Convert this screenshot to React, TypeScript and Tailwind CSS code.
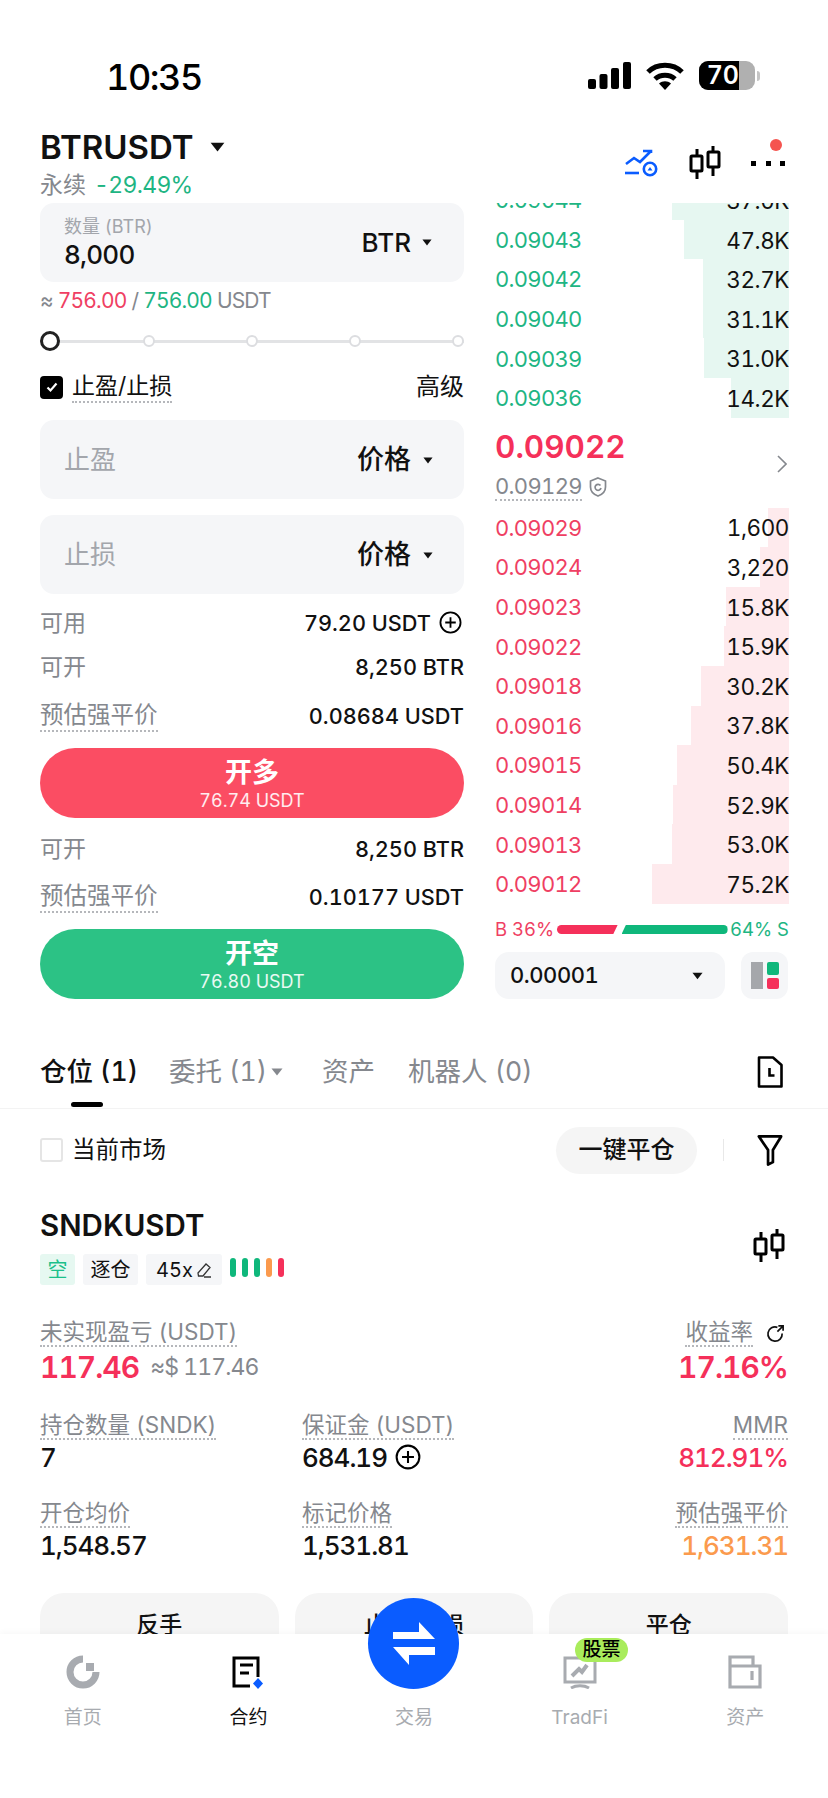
import type { ReactNode } from "react";

const FONT = "font-['Inter','Noto_Sans_CJK_SC',sans-serif]";

const BIDS = [
  { price: "0.09044", size: "37.0K", bar: 117 },
  { price: "0.09043", size: "47.8K", bar: 105 },
  { price: "0.09042", size: "32.7K", bar: 86 },
  { price: "0.09040", size: "31.1K", bar: 86 },
  { price: "0.09039", size: "31.0K", bar: 85 },
  { price: "0.09036", size: "14.2K", bar: 58 },
];

const ASKS = [
  { price: "0.09029", size: "1,600", bar: 21 },
  { price: "0.09024", size: "3,220", bar: 29 },
  { price: "0.09023", size: "15.8K", bar: 63 },
  { price: "0.09022", size: "15.9K", bar: 65 },
  { price: "0.09018", size: "30.2K", bar: 88 },
  { price: "0.09016", size: "37.8K", bar: 98 },
  { price: "0.09015", size: "50.4K", bar: 112 },
  { price: "0.09014", size: "52.9K", bar: 116 },
  { price: "0.09013", size: "53.0K", bar: 117 },
  { price: "0.09012", size: "75.2K", bar: 137 },
];

function Caret({ className = "" }: { className?: string }) {
  return (
    <svg viewBox="0 0 12 8" className={className}>
      <path d="M0.5 0.5h11L6 7.5z" fill="currentColor" />
    </svg>
  );
}

function CandleIcon({ className = "" }: { className?: string }) {
  return (
    <svg viewBox="0 0 32 33" fill="none" stroke="#000" strokeWidth="3" className={className}>
      <path d="M8 3v7M8 25v8M24 0v6M24 21v9" />
      <rect x="2" y="10" width="11" height="15" rx="1" />
      <rect x="19" y="6" width="11" height="15" rx="1" />
    </svg>
  );
}

function PlusCircle({ className = "" }: { className?: string }) {
  return (
    <svg viewBox="0 0 24 24" fill="none" stroke="#000" strokeWidth="1.9" className={className}>
      <circle cx="12" cy="12" r="10.5" />
      <path d="M12 6.5v11M6.5 12h11" />
    </svg>
  );
}

function BookRow({
  price,
  size,
  bar,
  side,
}: {
  price: string;
  size: string;
  bar: number;
  side: "bid" | "ask";
}) {
  const isBid = side === "bid";
  return (
    <div className="relative flex h-[39.6px] items-center justify-between pt-[2px] text-[22px] tracking-[-0.032em]">
      <div
        className={`absolute top-0 right-0 bottom-0 ${isBid ? "bg-[#e6f7f1]" : "bg-[#feeaed]"}`}
        style={{ width: bar }}
      />
      <span className={`relative ${isBid ? "text-[#1eb583]" : "text-[#ef3f63]"}`}>{price}</span>
      <span className="relative text-[22.5px] tracking-[-0.02em] text-[#111]">{size}</span>
    </div>
  );
}

function InfoRow({
  label,
  value,
  dotted,
  className = "",
}: {
  label: string;
  value: ReactNode;
  dotted?: boolean;
  className?: string;
}) {
  return (
    <div className={`flex h-[40px] items-center justify-between text-[21.7px] ${className}`}>
      <span
        className={
          dotted
            ? "border-b-2 border-dotted border-[#b5b7bb] text-[23.5px] leading-[30px] text-[#85888e]"
            : "text-[23px] text-[#85888e]"
        }
      >
        {label}
      </span>
      <span className="font-medium text-[#111]">{value}</span>
    </div>
  );
}

function InputBox({ placeholder, className = "" }: { placeholder: string; className?: string }) {
  return (
    <div
      className={`flex h-[79px] items-center justify-between rounded-[14px] bg-[#f5f6f8] pr-[31px] pl-[24px] ${className}`}
    >
      <span className="text-[26px] text-[#a3a6ac]">{placeholder}</span>
      <span className="flex items-center gap-[12px] pt-[1px] text-[27px] font-medium text-[#111]">
        价格
        <Caret className="h-[7px] w-[10px] text-[#111]" />
      </span>
    </div>
  );
}

function ActionButton({
  title,
  amount,
  color,
  className = "",
}: {
  title: string;
  amount: string;
  color: string;
  className?: string;
}) {
  return (
    <div
      className={`flex h-[70px] flex-col items-center justify-center rounded-full pt-[3px] text-white ${color} ${className}`}
    >
      <span className="text-[27px] leading-[32px] font-bold">{title}</span>
      <span className="text-[18px] leading-[24px] text-white/90">{amount}</span>
    </div>
  );
}

function StatLabel({ children }: { children: ReactNode }) {
  return (
    <span className="inline-block border-b-2 border-dotted border-[#b5b7bb] text-[22.5px] leading-[26px] text-[#85888e]">
      {children}
    </span>
  );
}

function Stat({
  label,
  value,
  right,
}: {
  label: ReactNode;
  value: ReactNode;
  right?: boolean;
}) {
  return (
    <div className={`flex flex-col ${right ? "items-end" : "items-start"}`}>
      <StatLabel>{label}</StatLabel>
      <div className="flex h-[34px] items-center text-[26px] font-medium tracking-[-0.04em] text-[#111]">{value}</div>
    </div>
  );
}

function NavItem({ label, icon, active }: { label: string; icon?: ReactNode; active?: boolean }) {
  return (
    <div className="flex w-[166px] flex-col items-center">
      <div className="flex h-[34px] w-full items-center justify-center">{icon}</div>
      <span className={`mt-[17px] text-[19px] leading-[24px] ${active ? "text-[#111]" : "text-[#a8abb0]"}`}>
        {label}
      </span>
    </div>
  );
}

export default function App() {
  return (
    <div className={`relative h-[1798px] w-[828px] overflow-hidden bg-white tabular-nums ${FONT}`}>
      {/* status bar */}
      <div className="flex h-[110px] items-start justify-between pt-[57px] pr-[68px] pl-[106px]">
        <span className="text-[36px] leading-[40px] font-medium tracking-[-0.04em] text-black">10:35</span>
        <div className="flex items-center gap-[15px] pt-[4px]">
          <svg viewBox="0 0 43 27" className="h-[27px] w-[43px]">
            <rect x="0" y="17" width="8" height="10" rx="2" />
            <rect x="11.5" y="12" width="8" height="15" rx="2" />
            <rect x="23" y="6" width="8" height="21" rx="2" />
            <rect x="35" y="0" width="8" height="27" rx="2" />
          </svg>
          <svg viewBox="0 0 38 28" fill="none" stroke="#000" className="h-[28px] w-[38px]">
            <path d="M2 10C11 1 27 1 36 10" strokeWidth="5" />
            <path d="M9 17C14.5 12 23.5 12 29 17" strokeWidth="5" />
            <path d="M13 21.5c3.5-3 8.5-3 12 0L19 28z" fill="#000" stroke="none" />
          </svg>
          <div className="flex items-center">
            <div className="relative flex h-[29px] w-[56px] items-center overflow-hidden rounded-[9px] bg-[#b0b0b0]">
              <div className="flex h-full w-[40px] items-center justify-end bg-black">
                <span className="text-[25px] leading-none font-semibold text-white">70</span>
              </div>
            </div>
            <div className="ml-[2px] h-[10px] w-[3px] rounded-r-full bg-[#c4c4c4]" />
          </div>
        </div>
      </div>

      {/* market header */}
      <div className="flex h-[93px] items-start justify-between pr-[40px] pl-[40px]">
        <div>
          <div className="flex h-[54px] items-center pt-[20px]">
            <span className="text-[33px] leading-[38px] font-semibold text-[#111]">BTRUSDT</span>
            <Caret className="ml-[16px] h-[10px] w-[15px] text-[#111]" />
          </div>
          <div className="mt-[6px] flex items-center gap-[8px] leading-[30px]">
            <span className="text-[23px] text-[#85888e]">永续</span>
            <span className="text-[23px] tracking-[-0.03em] text-[#1eb583]">-29.49%</span>
          </div>
        </div>
        <div className="relative mt-[36px] mr-[3px] flex items-center">
          <svg viewBox="0 0 33 28" fill="none" stroke="#0a5cff" strokeWidth="2.6" className="h-[28px] w-[33px]">
            <path d="M1 15l8-6 6 4L26 2M18 2h8v2" />
            <path d="M0 24h14" />
            <circle cx="25" cy="20" r="6.2" />
            <path d="M22.5 21.5L25 18l2.500 3.500z" fill="#0a5cff" stroke="none" />
          </svg>
          <CandleIcon className="ml-[31px] h-[33px] w-[32px]" />
          <div className="ml-[30px] flex w-[34px] justify-between pt-[1px]">
            <span className="h-[5px] w-[5px] bg-black" />
            <span className="h-[5px] w-[5px] bg-black" />
            <span className="h-[5px] w-[5px] bg-black" />
          </div>
          <span className="absolute top-[-7px] right-[3px] h-[12px] w-[12px] rounded-full bg-[#f5544f]" />
        </div>
      </div>

      {/* order form + order book */}
      <div className="flex h-[799px] items-start justify-between pr-[39px] pl-[40px]">
        <div className="w-[424px]">
          <div className="flex h-[79px] items-center justify-between rounded-[14px] bg-[#f5f6f8] pr-[32px] pl-[24px]">
            <div className="flex flex-col">
              <span className="text-[18px] leading-[24px] text-[#a3a6ac]">数量 (BTR)</span>
              <span className="text-[26px] leading-[32px] font-medium tracking-[-0.03em] text-[#111]">8,000</span>
            </div>
            <span className="flex items-center gap-[11px] text-[26px] font-medium text-[#111]">
              BTR
              <Caret className="h-[7px] w-[10px] text-[#111]" />
            </span>
          </div>

          <div className="flex h-[36px] items-center gap-[5px] pt-[1px] text-[21px] tracking-[-0.04em] text-[#85888e]">
            <span>≈</span>
            <span className="text-[#ef3f63]">756.00</span>
            <span>/</span>
            <span className="text-[#1eb583]">756.00</span>
            <span>USDT</span>
          </div>

          <div className="relative grid h-[46px] grid-cols-[103px_103px_103px_103px_12px] items-center">
            <div className="absolute top-[22px] right-0 left-0 h-[3px] bg-[#e2e3e5]" />
            <span className="relative h-[20px] w-[20px] rounded-full border-[3px] border-[#222] bg-white" />
            <span className="relative h-[12px] w-[12px] rounded-full border-2 border-[#dcdde0] bg-white" />
            <span className="relative h-[12px] w-[12px] rounded-full border-2 border-[#dcdde0] bg-white" />
            <span className="relative h-[12px] w-[12px] rounded-full border-2 border-[#dcdde0] bg-white" />
            <span className="relative h-[12px] w-[12px] rounded-full border-2 border-[#dcdde0] bg-white" />
          </div>

          <div className="flex h-[46px] items-center justify-between">
            <div className="flex items-center gap-[9px]">
              <div className="flex h-[23px] w-[23px] items-center justify-center rounded-[4px] bg-black">
                <svg viewBox="0 0 14 14" fill="none" stroke="#fff" strokeWidth="2.2" className="h-[14px] w-[14px]">
                  <path d="M2.5 7.5l3 3 6-7" />
                </svg>
              </div>
              <span className="border-b-2 border-dotted border-[#b5b7bb] text-[23px] leading-[30px] text-[#111]">
                止盈/止损
              </span>
            </div>
            <span className="text-[24px] text-[#111]">高级</span>
          </div>

          <InputBox placeholder="止盈" className="mt-[10px]" />
          <InputBox placeholder="止损" className="mt-[16px]" />

          <InfoRow
            className="mt-[9px]"
            label="可用"
            value={
              <span className="mr-[2px] flex items-center gap-[8px]">
                79.20 USDT
                <PlusCircle className="h-[23px] w-[23px]" />
              </span>
            }
          />
          <InfoRow className="mt-[4px]" label="可开" value="8,250 BTR" />
          <InfoRow className="mt-[9px]" label="预估强平价" value="0.08684 USDT" dotted />
          <ActionButton className="mt-[12px]" title="开多" amount="76.74 USDT" color="bg-[#fb4d63]" />
          <InfoRow className="mt-[11px]" label="可开" value="8,250 BTR" />
          <InfoRow className="mt-[8px]" label="预估强平价" value="0.10177 USDT" dotted />
          <ActionButton className="mt-[12px]" title="开空" amount="76.80 USDT" color="bg-[#2cc285]" />
        </div>

        <div className="h-[799px] w-[294px] overflow-hidden">
          <div className="-mt-[23px]">
            {BIDS.map((row) => (
              <BookRow key={row.price} {...row} side="bid" />
            ))}
          </div>

          <div className="relative h-[90px]">
            <div className="pt-[10px] text-[31.5px] leading-[38px] font-semibold text-[#f5305a]">0.09022</div>
            <div className="mt-[7px] flex items-center gap-[7px]">
              <span className="border-b-2 border-dotted border-[#b5b7bb] text-[22px] leading-[26px] tracking-[-0.03em] text-[#85888e]">
                0.09129
              </span>
              <svg viewBox="0 0 18 20" fill="none" stroke="#85888e" strokeWidth="1.7" className="h-[20px] w-[18px]">
                <path d="M9 1l7.5 3v6c0 4.5-3.3 7.5-7.5 9-4.2-1.500-7.500-4.500-7.500-9V4z" />
                <path d="M11.500 8.500A3 3 0 1 0 12 11" />
              </svg>
            </div>
            <svg
              viewBox="0 0 10 18"
              fill="none"
              stroke="#85888e"
              strokeWidth="1.6"
              className="absolute top-[37px] right-[2px] h-[18px] w-[10px]"
            >
              <path d="M1 1l8 8-8 8" />
            </svg>
          </div>

          <div>
            {ASKS.map((row) => (
              <BookRow key={row.price} {...row} side="ask" />
            ))}
          </div>

          <div className="mt-[16px] flex h-[20px] items-center justify-between text-[18.5px] leading-none">
            <span className="text-[#ef3f63]">B 36%</span>
            <div className="flex items-center gap-[4px]">
              <div className="h-[9px] w-[61px] rounded-l-full bg-[#f5305a] [clip-path:polygon(0_0,100%_0,93%_100%,0_100%)]" />
              <div className="h-[9px] w-[106px] rounded-r-full bg-[#0fb77b] [clip-path:polygon(4%_0,100%_0,100%_100%,0_100%)]" />
            </div>
            <span className="text-[#1eb583]">64% S</span>
          </div>

          <div className="mt-[12px] flex gap-[16px]">
            <div className="flex h-[47px] w-[230px] items-center justify-between rounded-[14px] bg-[#f5f6f8] pt-[1px] pr-[22px] pl-[15px]">
              <span className="text-[22px] font-medium tracking-[-0.02em] text-[#111]">0.00001</span>
              <Caret className="h-[8px] w-[11px] text-[#111]" />
            </div>
            <div className="flex h-[47px] w-[47px] items-center justify-center gap-[4px] rounded-[12px] bg-[#f5f6f8]">
              <div className="h-[27px] w-[12px] bg-[#a5a7ab]" />
              <div className="flex h-[27px] w-[12px] flex-col justify-between">
                <div className="h-[13px] rounded-[2px] bg-[#0fb77b]" />
                <div className="h-[11px] rounded-[2px] bg-[#f5305a]" />
              </div>
            </div>
          </div>
        </div>
      </div>

      {/* tabs */}
      <div className="relative flex h-[107px] items-center justify-between border-b border-[#f3f3f3] pt-[33px] pr-[45px] pl-[40px]">
        <div className="flex items-center text-[26.5px] text-[#85888e]">
          <span className="font-medium text-[#111]">仓位 (1)</span>
          <span className="ml-[31px]">委托 (1)</span>
          <Caret className="ml-[4px] h-[8px] w-[12px] text-[#85888e]" />
          <span className="ml-[39px]">资产</span>
          <span className="ml-[33px]">机器人 (0)</span>
        </div>
        <svg viewBox="0 0 26 32" fill="none" stroke="#000" strokeWidth="2.6" className="h-[32px] w-[26px]">
          <path d="M2 1.500h14L24.500 9v21.500H2z" strokeLinejoin="round" />
          <path d="M12.500 12v7.500h5" />
        </svg>
        <div className="absolute bottom-[1px] left-[71px] h-[5px] w-[32px] rounded-full bg-black" />
      </div>

      {/* filter row */}
      <div className="flex h-[82px] items-center justify-between pr-[45px] pl-[40px]">
        <div className="flex items-center gap-[9px]">
          <div className="h-[24px] w-[23px] rounded-[3px] border-2 border-[#e5e5e5]" />
          <span className="text-[23.5px] text-[#111]">当前市场</span>
        </div>
        <div className="flex items-center">
          <div className="flex h-[47px] w-[141px] items-center justify-center rounded-full bg-[#f5f5f5] text-[24px] font-medium text-[#111]">
            一键平仓
          </div>
          <div className="mr-[33px] ml-[26px] h-[22px] w-px bg-[#e8e8e8]" />
          <svg viewBox="0 0 26 32" fill="none" stroke="#000" strokeWidth="2.8" className="h-[31px] w-[26px]">
            <path d="M1.500 1.500h23L16 15.500V28l-5 2.500V15.500z" strokeLinejoin="round" />
          </svg>
        </div>
      </div>

      {/* position card */}
      <div className="px-[40px] pt-[14px]">
        <div className="flex items-center justify-between">
          <div>
            <div className="text-[29.5px] leading-[40px] font-semibold text-[#111]">SNDKUSDT</div>
            <div className="mt-[9px] flex h-[31px] items-stretch gap-[8px] text-[20px] text-[#111]">
              <span className="flex w-[35px] items-center justify-center rounded-[3px] bg-[#e6f8f1] text-[#1cc08a]">
                空
              </span>
              <span className="flex w-[55px] items-center justify-center rounded-[3px] bg-[#f5f6f8]">逐仓</span>
              <span className="flex w-[76px] items-center justify-center gap-[3px] rounded-[3px] bg-[#f5f6f8] text-[20px]">
                45x
                <svg viewBox="0 0 16 16" fill="none" stroke="#333" strokeWidth="1.300" className="h-[16px] w-[16px]">
                  <path d="M2 11L10 2l4 3.500L7 14H2.500zM8 15h7" />
                </svg>
              </span>
              <div className="flex items-start gap-[6px] pt-[4px]">
                <span className="h-[19px] w-[6px] rounded-full bg-[#0fb77b]" />
                <span className="h-[19px] w-[6px] rounded-full bg-[#0fb77b]" />
                <span className="h-[19px] w-[6px] rounded-full bg-[#0fb77b]" />
                <span className="h-[19px] w-[6px] rounded-full bg-[#fb9a4d]" />
                <span className="h-[19px] w-[6px] rounded-full bg-[#f5305a]" />
              </div>
            </div>
          </div>
          <CandleIcon className="mr-[3px] h-[33px] w-[32px]" />
        </div>

        <div className="mt-[34px] grid grid-cols-[262px_1fr_auto] grid-rows-[93px_88px_auto]">
          <div className="col-span-2 flex flex-col items-start">
            <StatLabel>未实现盈亏 (USDT)</StatLabel>
            <div className="mt-[3px] flex h-[34px] items-center gap-[11px]">
              <span className="text-[30px] font-semibold tracking-[-0.033em] text-[#f5305a]">117.46</span>
              <span className="text-[23px] tracking-[-0.04em] text-[#85888e]">≈$ 117.46</span>
            </div>
          </div>
          <div className="flex flex-col items-end">
            <div className="mr-[3px] flex items-center gap-[13px]">
              <StatLabel>收益率</StatLabel>
              <svg viewBox="0 0 20 20" fill="none" stroke="#111" strokeWidth="1.800" className="h-[19px] w-[19px]">
                <path d="M12 3.500A7.500 7.500 0 1 0 17 10M13 2h5v5M18 2l-6 6" />
              </svg>
            </div>
            <div className="mt-[3px] flex h-[34px] items-center text-[30px] font-semibold tracking-[-0.033em] text-[#f5305a]">
              17.16%
            </div>
          </div>

          <Stat label="持仓数量 (SNDK)" value="7" />
          <Stat
            label="保证金 (USDT)"
            value={
              <span className="flex items-center gap-[8px]">
                684.19
                <PlusCircle className="h-[26px] w-[26px]" />
              </span>
            }
          />
          <Stat right label="MMR" value={<span className="text-[#f5305a]">812.91%</span>} />

          <Stat label="开仓均价" value="1,548.57" />
          <Stat label="标记价格" value="1,531.81" />
          <Stat right label="预估强平价" value={<span className="text-[#fb9a4d]">1,631.31</span>} />
        </div>

        <div className="mt-[31px] grid grid-cols-3 gap-[16px]">
          {["反手", "止盈/止损", "平仓"].map((label) => (
            <div
              key={label}
              className="flex h-[64px] justify-center rounded-[24px] bg-[#f5f5f5] pt-[16px] text-[23px] leading-[32px] font-medium text-[#111]"
            >
              {label}
            </div>
          ))}
        </div>
      </div>

      {/* bottom nav */}
      <div className="absolute right-0 bottom-0 left-0 h-[164px] bg-white pt-[21px] shadow-[0_-2px_6px_rgba(0,0,0,0.03)]">
        <div className="flex">
          <NavItem
            label="首页"
            icon={
              <svg viewBox="0 0 34 34" fill="none" className="h-[34px] w-[34px]">
                <path d="M17 4A13 13 0 1 0 30 17" stroke="#a8abb0" strokeWidth="7" />
                <path d="M20 8h8v8h-8z" fill="#a8abb0" />
              </svg>
            }
          />
          <NavItem
            active
            label="合约"
            icon={
              <svg viewBox="0 0 34 34" fill="none" className="h-[34px] w-[34px]">
                <path d="M27 22V3H3v28h16" stroke="#000" strokeWidth="3" />
                <path d="M9 10h13M9 18h9" stroke="#000" strokeWidth="3" />
                <path d="M27 23l5 5.500-5 5.500-5-5.500z" fill="#0a5cff" />
              </svg>
            }
          />
          <NavItem label="交易" />
          <NavItem
            label="TradFi"
            icon={
              <svg viewBox="0 0 34 34" fill="none" stroke="#a8abb0" strokeWidth="3" className="h-[34px] w-[34px]">
                <path d="M2 3h30v24H2z" />
                <path d="M8 33c5-3 13-3 18 0" />
                <path d="M9 21l7-7 3 3 5-7" strokeWidth="4" />
              </svg>
            }
          />
          <NavItem
            label="资产"
            icon={
              <svg viewBox="0 0 34 34" fill="none" stroke="#a8abb0" strokeWidth="3.200" className="h-[34px] w-[34px]">
                <path d="M2 32V2h23v9M2 11h30v21H2z" />
                <path d="M24 16v9" />
              </svg>
            }
          />
        </div>
      </div>

      {/* trade button */}
      <div className="absolute top-[1598px] left-[368px] flex h-[91px] w-[91px] items-center justify-center rounded-full bg-[#0a5cff]">
        <svg viewBox="0 0 42 43" fill="#fff" className="h-[43px] w-[42px]">
          <path d="M26 0l16 17H0v-7h26z" />
          <path d="M16 43L0 25h42v8H16z" />
        </svg>
      </div>

      {/* stock badge */}
      <div className="absolute top-[1638px] left-[575px] flex h-[24px] w-[53px] items-center justify-center rounded-full bg-[#a9ec5c] text-[19px] font-medium text-black">
        股票
      </div>
    </div>
  );
}
